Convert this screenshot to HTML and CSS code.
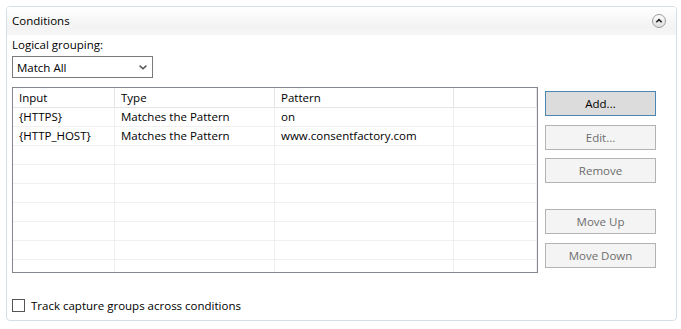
FILE: index.html
```html
<!DOCTYPE html>
<html lang="en">
<head>
  <meta charset="UTF-8">
  <title>Conditions</title>
  <link rel="stylesheet" href="styles.css">
</head>
<body>
  <div class="panel">
    <div class="panel-head">
      <span class="title">Conditions</span>
      <span class="collapse">
        <svg width="14" height="14" viewBox="0 0 14 14">
          <defs>
            <linearGradient id="cg" x1="0" y1="0" x2="0" y2="1">
              <stop offset="0" stop-color="#ffffff"/>
              <stop offset="1" stop-color="#dcdcdc"/>
            </linearGradient>
          </defs>
          <circle cx="7" cy="7" r="6.5" fill="url(#cg)" stroke="#9a9a9a"/>
          <path d="M4.3 8.3 L7 5.6 L9.7 8.3" fill="none" stroke="#222" stroke-width="1.6"/>
        </svg>
      </span>
    </div>

    <div class="panel-body">
      <div class="field-label">Logical grouping:</div>
      <div class="select">
        <span>Match All</span>
        <svg width="8" height="5" viewBox="0 0 8 5">
          <path d="M0.6 0.6 L4 3.8 L7.4 0.6" fill="none" stroke="#555" stroke-width="1.5"/>
        </svg>
      </div>

      <div class="main">
        <div class="list">
          <div class="grid">
            <div class="cell head">Input</div>
            <div class="cell head">Type</div>
            <div class="cell head">Pattern</div>
            <div class="cell head"></div>

            <div class="cell">{HTTPS}</div>
            <div class="cell">Matches the Pattern</div>
            <div class="cell">on</div>
            <div class="cell"></div>

            <div class="cell">{HTTP_HOST}</div>
            <div class="cell">Matches the Pattern</div>
            <div class="cell">www.consentfactory.com</div>
            <div class="cell"></div>

            <div class="cell"></div><div class="cell"></div><div class="cell"></div><div class="cell"></div>
            <div class="cell"></div><div class="cell"></div><div class="cell"></div><div class="cell"></div>
            <div class="cell"></div><div class="cell"></div><div class="cell"></div><div class="cell"></div>
            <div class="cell"></div><div class="cell"></div><div class="cell"></div><div class="cell"></div>
            <div class="cell"></div><div class="cell"></div><div class="cell"></div><div class="cell"></div>
            <div class="cell"></div><div class="cell"></div><div class="cell"></div><div class="cell"></div>
            <div class="cell"></div><div class="cell"></div><div class="cell"></div><div class="cell"></div>
            <div class="cell"></div><div class="cell"></div><div class="cell"></div><div class="cell"></div>
          </div>
        </div>

        <div class="actions">
          <button class="btn primary">Add...</button>
          <button class="btn edit" disabled>Edit...</button>
          <button class="btn remove" disabled>Remove</button>
          <button class="btn move-up" disabled>Move Up</button>
          <button class="btn move-down" disabled>Move Down</button>
        </div>
      </div>

      <label class="check">
        <span class="box"></span>
        <span>Track capture groups across conditions</span>
      </label>
    </div>
  </div>
</body>
</html>
```

FILE: styles.css
```css
* {
  box-sizing: border-box;
}
body {
  margin: 0;
  background: #fff;
  font-family: "Open Sans", "Noto Sans", sans-serif;
  font-size: 11.5px;
  color: #000;
}
.panel {
  margin: 6px;
  width: 671px;
  height: 315px;
  border: 1px solid #d6dfe6;
  border-radius: 4px;
  overflow: hidden;
}
.panel-head {
  height: 28px;
  padding: 0 10px 0 5px;
  display: flex;
  align-items: center;
  justify-content: space-between;
  background: linear-gradient(to bottom, #ffffff 0%, #f3f3f3 70%, #f6f6f6 100%);
}
.title {
  margin-top: -1px;
}
.collapse {
  display: flex;
  margin-top: -1px;
}
.panel-body {
  padding: 0 5px;
}
.field-label {
  line-height: 20px;
}
.select {
  margin-top: 1px;
  width: 141px;
  height: 22px;
  border: 1px solid #7a7a7a;
  display: flex;
  align-items: center;
  justify-content: space-between;
  padding: 0 5px 0 4px;
  background: #fff;
}
.select svg {
  margin-top: 1px;
}
.main {
  display: flex;
  gap: 7px;
  margin-top: 9px;
}
.list {
  width: 526px;
  height: 186px;
  border: 1px solid #828790;
  overflow: hidden;
}
.grid {
  display: grid;
  grid-template-columns: 102px 160px 179px 1fr;
}
.cell {
  height: 19px;
  line-height: 18px;
  padding: 0 6px;
  border-right: 1px solid #f0f0f0;
  border-bottom: 1px solid #f0f0f0;
  white-space: nowrap;
}
.cell.head {
  height: 20px;
  line-height: 20px;
  border-right-color: #e5e5e5;
  border-bottom-color: #e5e5e5;
}
.actions {
  display: flex;
  flex-direction: column;
  padding-top: 4px;
}
.btn {
  width: 111px;
  height: 25px;
  font: inherit;
  color: #000;
  background: #e1e1e1;
  border: 1px solid #adadad;
  padding: 0;
}
.btn.primary {
  background: #dcdcdc;
  border-color: #4a86b4;
}
.btn:disabled {
  background: #f4f4f4;
  border-color: #b3b3b3;
  color: #6d6d6d;
}
.edit {
  margin-top: 9px;
}
.remove {
  margin-top: 8px;
}
.move-up {
  margin-top: 26px;
}
.move-down {
  margin-top: 9px;
}
.check {
  display: flex;
  align-items: center;
  gap: 6px;
  margin-top: 25px;
}
.box {
  width: 13px;
  height: 13px;
  border: 1px solid #555;
  background: #fff;
}
```
